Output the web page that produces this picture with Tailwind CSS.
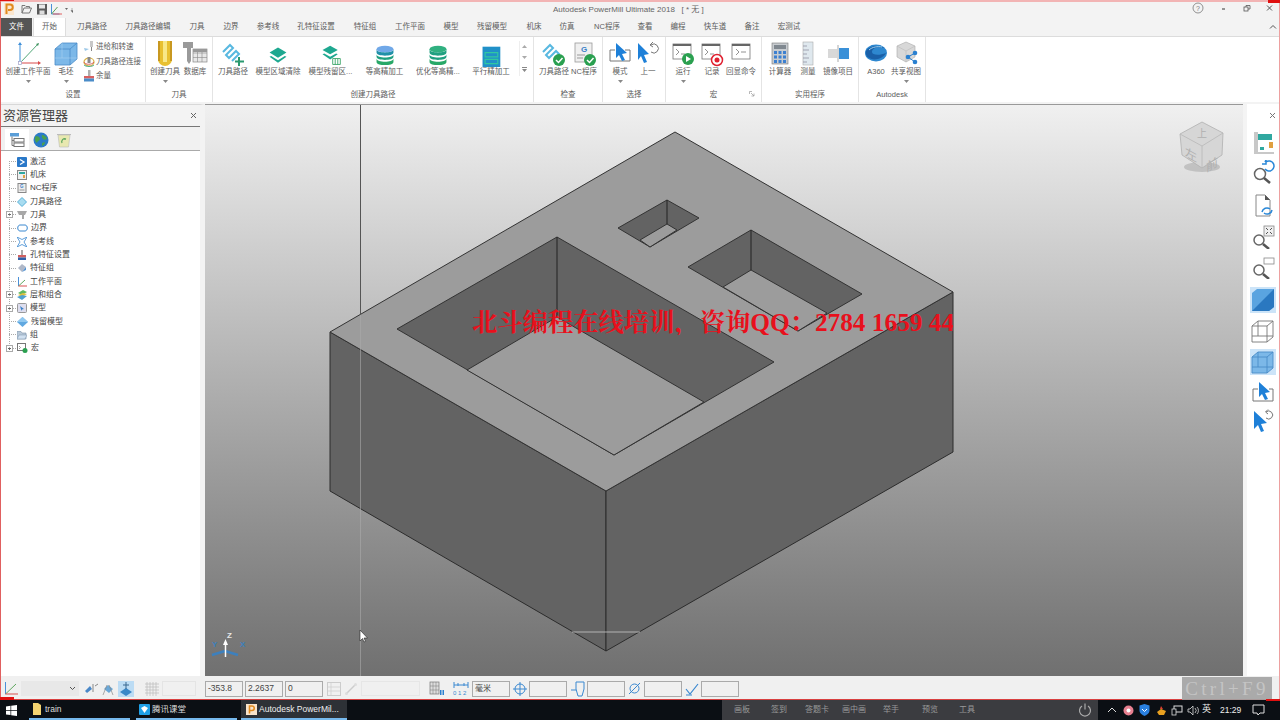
<!DOCTYPE html>
<html lang="zh">
<head>
<meta charset="utf-8">
<title>Autodesk PowerMill Ultimate 2018</title>
<script src="https://cdn.jsdelivr.net/npm/@tailwindcss/browser@4"></script>
</head>
<body class="m-0 overflow-hidden bg-black">
<div class="relative flex h-[720px] w-[1280px] flex-col overflow-hidden font-['Liberation_Sans','Noto_Sans_CJK_SC',sans-serif] text-[7.5px] text-[#5c5c5c]">

<!-- window -->
<div class="relative flex h-[700px] flex-col border-t-[2px] border-r-[1px] border-b-[1px] border-l-[1px] border-t-[#f2b4b4] border-r-[#eda0a0] border-b-[#d94040] border-l-[#e06060] bg-[#f3f3f3]">

  <!-- title bar -->
  <div class="relative flex h-[16px] items-center pl-[2px]">
    <svg width="70" height="16" viewBox="0 0 70 16">
      <rect x="1" y="1" width="10" height="12" fill="#fbe7d0"/>
      <path d="M3.500 12V2.500h3.500a2.500 2.500 0 0 1 0 5.500h-2" fill="none" stroke="#e08a20" stroke-width="2"/>
      <path d="M19 11V3.500h3l1 1h3.500v1.500M19 11l2-5h7.500l-2 5z" fill="none" stroke="#777" stroke-width="1"/>
      <rect x="34" y="2" width="10" height="10.500" fill="#5a5a5a"/><rect x="36" y="2.500" width="6" height="4" fill="#e8e8e8"/><rect x="36.500" y="8.500" width="5" height="4" fill="#ddd"/>
      <path d="M48.500 2v10h8" fill="none" stroke="#4a90d9" stroke-width="1"/><path d="M48.500 12l6-7" stroke="#5aa05a" stroke-width="1"/><path d="M50 12h9" stroke="#e06060" stroke-width="1"/>
      <path d="M62 6h3l-1.500 2z" fill="#666"/><path d="M68 7h3M68 8.500l1.500 2 1.500-2z" fill="#666" stroke="#666" stroke-width=".5"/>
    </svg>
    <span class="absolute top-[2px] left-[552px] text-[8px] leading-[12px] whitespace-pre text-[#666]">Autodesk PowerMill Ultimate 2018   [ * 无 ]</span>
    <div class="absolute top-0 right-0 flex h-[14px] items-center">
      <svg width="90" height="14" viewBox="0 0 90 14">
        <circle cx="9" cy="6" r="5" fill="none" stroke="#777" stroke-width=".8"/><text x="9" y="8.500" font-size="7" text-anchor="middle" fill="#777">?</text>
        <path d="M33 7h3" stroke="#555" stroke-width="1.200"/>
        <rect x="55" y="5" width="4" height="4" fill="none" stroke="#555" stroke-width=".8"/><path d="M57 5V3.500h4V7h-2" fill="none" stroke="#555" stroke-width=".8"/>
        <path d="M78 3.500l5 5M83 3.500l-5 5" stroke="#555" stroke-width="1"/>
      </svg>
    </div>
  </div>

  <!-- tabs -->
  <div class="relative flex h-[18px] items-stretch text-center leading-[18px] text-[#5c5c5c]">
    <div class="w-[31px] bg-[#555] text-white">文件</div>
    <div class="ml-[1px] w-[33px] border-r border-l border-[#ddd] bg-white">开始</div>
    <div class="w-[52px]">刀具路径</div>
    <div class="w-[60px]">刀具路径编辑</div>
    <div class="w-[38px]">刀具</div>
    <div class="w-[30px]">边界</div>
    <div class="w-[44px]">参考线</div>
    <div class="w-[52px]">孔特征设置</div>
    <div class="w-[46px]">特征组</div>
    <div class="w-[44px]">工作平面</div>
    <div class="w-[38px]">模型</div>
    <div class="w-[44px]">残留模型</div>
    <div class="w-[40px]">机床</div>
    <div class="w-[26px]">仿真</div>
    <div class="w-[54px]">NC程序</div>
    <div class="w-[22px]">查看</div>
    <div class="w-[44px]">编程</div>
    <div class="w-[30px]">快车道</div>
    <div class="w-[44px]">备注</div>
    <div class="w-[30px]">宏测试</div>
    <svg class="absolute top-[6px] right-[2px]" width="8" height="6" viewBox="0 0 8 6"><path d="M1 4.500l3-3 3 3" fill="none" stroke="#555" stroke-width="1"/></svg>
  </div>

  <!-- ribbon -->
  <div class="flex h-[66px] border-t border-[#dcdcdc] bg-white">
    <!-- 设置 -->
    <div class="flex w-[145px] flex-col justify-between border-r border-[#e4e4e4]">
      <div class="flex pt-[4px] pl-[1px]">
        <div class="flex w-[52px] flex-col items-center">
          <svg width="26" height="26" viewBox="0 0 26 26"><path d="M5 3v19" stroke="#3f8fd8" stroke-width="1"/><path d="M5 1l-2 3h4z" fill="#3f8fd8"/><path d="M5 22L23 3" stroke="#52a878" stroke-width="1"/><path d="M24 2l-3 1 2 2z" fill="#3a8f5a"/><path d="M5 22h19" stroke="#d84a4a" stroke-width="1"/><path d="M26 22l-3-2v4z" fill="#d84a4a"/><rect x="3.500" y="20.500" width="3" height="3" fill="#fff" stroke="#a0a0c8" stroke-width=".7"/></svg>
          <span class="h-[9px] leading-[9px] whitespace-nowrap">创建工作平面</span>
          <svg class="mt-[4px]" width="5" height="3" viewBox="0 0 5 3"><path d="M0 0h5L2.500 3z" fill="#888"/></svg>
        </div>
        <div class="flex w-[24px] flex-col items-center">
          <svg width="26" height="26" viewBox="0 0 26 26"><path d="M2 8l7-6h15v16l-7 6H2z" fill="#7cb8e8" stroke="#4a8cc8" stroke-width=".8"/><path d="M2 8h15v16M17 8l7-6" fill="none" stroke="#4a8cc8" stroke-width=".8"/><path d="M9 2v15H2M9 17h15" fill="none" stroke="#a8d0f0" stroke-width=".6"/></svg>
          <span class="h-[9px] leading-[9px] whitespace-nowrap">毛坯</span>
          <svg class="mt-[4px]" width="5" height="3" viewBox="0 0 5 3"><path d="M0 0h5L2.500 3z" fill="#888"/></svg>
        </div>
        <div class="flex flex-col gap-[2.500px] pl-[5px]">
          <div class="flex h-[12px] items-center gap-[1px] whitespace-nowrap"><svg width="12" height="12" viewBox="0 0 12 12"><rect x="7" y="0" width="3" height="6" fill="#c8c8c8"/><path d="M8.500 6v4" stroke="#888"/><path d="M1 7l5 1-4 2z" fill="#9cc8e8"/></svg>进给和转速</div>
          <div class="flex h-[12px] items-center gap-[1px] whitespace-nowrap"><svg width="12" height="12" viewBox="0 0 12 12"><ellipse cx="6" cy="6" rx="5" ry="4" fill="none" stroke="#d8b040" stroke-width="1.200"/><path d="M1 6c1 3 8 3 10 0" fill="none" stroke="#d86060"/><path d="M1 9c2 2 8 2 10 0" fill="none" stroke="#50b090"/><rect x="4.500" y="1" width="3" height="6" fill="#888"/></svg>刀具路径连接</div>
          <div class="flex h-[12px] items-center gap-[1px] whitespace-nowrap"><svg width="12" height="12" viewBox="0 0 12 12"><rect x="5" y="0" width="2.500" height="6" fill="#b0b0b0"/><rect x="1" y="6" width="10" height="2.500" fill="#d86060"/><rect x="1" y="8.500" width="10" height="3" fill="#4a8cc8"/></svg>余量</div>
        </div>
      </div>
      <div class="mb-[1px] h-[12px] text-center leading-[12px]">设置</div>
    </div>
    <!-- 刀具 -->
    <div class="flex w-[67px] flex-col justify-between border-r border-[#e4e4e4]">
      <div class="flex pt-[4px] pl-[4px]">
        <div class="flex w-[30px] flex-col items-center">
          <svg width="26" height="26" viewBox="0 0 26 26"><path d="M6 0h14v18a7 7 0 0 1-14 0z" fill="#e8c030"/><path d="M11 0h4v21h-4z" fill="#f8e888"/><path d="M6 0h2v20H6zM18 0h2v20h-2z" fill="#c89820"/></svg>
          <span class="h-[9px] leading-[9px] whitespace-nowrap">创建刀具</span>
          <svg class="mt-[4px]" width="5" height="3" viewBox="0 0 5 3"><path d="M0 0h5L2.500 3z" fill="#888"/></svg>
        </div>
        <div class="flex w-[30px] flex-col items-center">
          <svg width="26" height="26" viewBox="0 0 26 26"><path d="M1 1h10v6H9v13l-2 3-2-3V7H1z" fill="#9a9a9a"/><rect x="11" y="8" width="14" height="13" fill="#e8e8e8" stroke="#888" stroke-width=".7"/><path d="M11 12h14M11 16.500h14M15.500 8v13M20 8v13" stroke="#888" stroke-width=".6"/><rect x="11" y="8" width="14" height="3" fill="#999"/></svg>
          <span class="h-[9px] leading-[9px] whitespace-nowrap">数据库</span>
        </div>
      </div>
      <div class="mb-[1px] h-[12px] text-center leading-[12px]">刀具</div>
    </div>
    <!-- 创建刀具路径 -->
    <div class="flex w-[321px] flex-col justify-between border-r border-[#e4e4e4]">
      <div class="flex pt-[4px] pl-[5px]">
        <div class="flex w-[30px] flex-col items-center">
          <svg width="26" height="26" viewBox="0 0 26 26"><path d="M3 11l7-7 3 3-7 7 3 3 7-7 3 3-7 7" fill="none" stroke="#58b8e0" stroke-width="2"/><path d="M19 16v9M15 20.500h9" stroke="#2a9a70" stroke-width="2"/></svg>
          <span class="h-[9px] leading-[9px] whitespace-nowrap">刀具路径</span>
        </div>
        <div class="ml-[3px] flex h-[36px] w-[268px]">
          <div class="flex w-[54px] flex-col items-center">
            <svg class="mt-[4px]" width="22" height="22" viewBox="0 0 26 26"><path d="M13 3l10 6-10 6-10-6z" fill="#1ea890"/><path d="M5 13l8 5 8-5 2 1-10 7-10-7z" fill="#1ea890"/></svg>
            <span class="h-[9px] leading-[9px] whitespace-nowrap">模型区域清除</span>
          </div>
          <div class="flex w-[51px] flex-col items-center">
            <svg class="mt-[4px]" width="22" height="22" viewBox="0 0 26 26"><path d="M12 1l9 5-9 5-9-5z" fill="#1ea890"/><path d="M5 10l7 4 7-4 2 1-9 6-9-6z" fill="#1ea890"/><path d="M15 16h9v7h-9z" fill="#fff" stroke="#30a060" stroke-width="1"/><path d="M18 16v7M21 16v7" stroke="#30a060"/></svg>
            <span class="h-[9px] leading-[9px] whitespace-nowrap">模型残留区...</span>
          </div>
          <div class="flex w-[57px] flex-col items-center">
            <svg class="mt-[4px]" width="22" height="22" viewBox="0 0 26 26"><ellipse cx="13" cy="5" rx="10" ry="4" fill="#70a8e8"/><path d="M3 5v4c0 5 20 5 20 0V5c0 5-20 5-20 0z" fill="#2090a8"/><path d="M3 11v3c0 5 20 5 20 0v-3c0 5-20 5-20 0z" fill="#20a080"/><path d="M3 16v4c0 5 20 5 20 0v-4c0 5-20 5-20 0z" fill="#28a868"/></svg>
            <span class="h-[9px] leading-[9px] whitespace-nowrap">等高精加工</span>
          </div>
          <div class="flex w-[50px] flex-col items-center">
            <svg class="mt-[4px]" width="22" height="22" viewBox="0 0 26 26"><ellipse cx="13" cy="5" rx="10" ry="4" fill="#30b080"/><path d="M3 5v4c0 5 20 5 20 0V5c0 5-20 5-20 0z" fill="#20a080"/><path d="M3 11v3c0 5 20 5 20 0v-3c0 5-20 5-20 0z" fill="#20a080"/><path d="M3 16v4c0 5 20 5 20 0v-4c0 5-20 5-20 0z" fill="#28a868"/></svg>
            <span class="h-[9px] leading-[9px] whitespace-nowrap">优化等高精...</span>
          </div>
          <div class="flex w-[56px] flex-col items-center">
            <svg class="mt-[4px]" width="22" height="22" viewBox="0 0 26 26"><rect x="3" y="2" width="21" height="24" fill="#2090c8"/><path d="M6 9h15v5H6zM6 17h15v5H6z" fill="none" stroke="#30c8a0" stroke-width="1.300"/></svg>
            <span class="h-[9px] leading-[9px] whitespace-nowrap">平行精加工</span>
          </div>
        </div>
        <div class="flex h-[35px] w-[10px] flex-col items-center justify-around border-l border-[#eee] text-[#999]">
          <svg width="5" height="3" viewBox="0 0 5 3"><path d="M0 3h5L2.500 0z" fill="#aaa"/></svg>
          <svg width="5" height="3" viewBox="0 0 5 3"><path d="M0 0h5L2.500 3z" fill="#aaa"/></svg>
          <svg width="5" height="5" viewBox="0 0 5 5"><path d="M0 0h5v1H0zM0 2h5L2.500 5z" fill="#888"/></svg>
        </div>
      </div>
      <div class="mb-[1px] h-[12px] text-center leading-[12px]">创建刀具路径</div>
    </div>
    <!-- 检查 -->
    <div class="flex w-[69px] flex-col justify-between border-r border-[#e4e4e4]">
      <div class="flex pt-[4px] pl-[5px]">
        <div class="flex w-[30px] flex-col items-center">
          <svg width="26" height="26" viewBox="0 0 26 26"><path d="M2 11l7-7 3 3-7 7 3 3 7-7 3 3-5 5" fill="none" stroke="#58b8e0" stroke-width="2"/><circle cx="18" cy="19" r="6" fill="#2aa050"/><path d="M15 19l2.500 2.500 4-4.500" fill="none" stroke="#fff" stroke-width="1.500"/></svg>
          <span class="h-[9px] leading-[9px] whitespace-nowrap">刀具路径</span>
        </div>
        <div class="flex w-[30px] flex-col items-center">
          <svg width="26" height="26" viewBox="0 0 26 26"><rect x="4" y="2" width="17" height="19" fill="#f0f0f0" stroke="#999" stroke-width=".8"/><text x="10" y="11" font-size="8" font-weight="bold" fill="#3a80c8">G</text><path d="M6 14h8M6 17h6" stroke="#999"/><circle cx="19" cy="19" r="6" fill="#2aa050"/><path d="M16 19l2.500 2.500 4-4.500" fill="none" stroke="#fff" stroke-width="1.500"/></svg>
          <span class="h-[9px] leading-[9px] whitespace-nowrap">NC程序</span>
        </div>
      </div>
      <div class="mb-[1px] h-[12px] text-center leading-[12px]">检查</div>
    </div>
    <!-- 选择 -->
    <div class="flex w-[63px] flex-col justify-between border-r border-[#e4e4e4]">
      <div class="flex pt-[4px] pl-[3px]">
        <div class="flex w-[28px] flex-col items-center">
          <svg width="26" height="26" viewBox="0 0 26 26"><path d="M3 9h5M18 9h5v11H3V9" fill="none" stroke="#777" stroke-width="1"/><path d="M9 2l11 10-5 1 3 6-3 1-3-6-3 3z" fill="#1e80d8"/></svg>
          <span class="h-[9px] leading-[9px] whitespace-nowrap">模式</span>
          <svg class="mt-[4px]" width="5" height="3" viewBox="0 0 5 3"><path d="M0 0h5L2.500 3z" fill="#888"/></svg>
        </div>
        <div class="flex w-[28px] flex-col items-center">
          <svg width="26" height="26" viewBox="0 0 26 26"><path d="M3 2l11 11-5 1 3 7-3 1-3-7-3 4z" fill="#1e80d8"/><path d="M16 4a4.500 4.500 0 1 1 0 7" fill="none" stroke="#777" stroke-width="1"/><path d="M18 1l-3 3 3 2" fill="none" stroke="#777" stroke-width="1"/></svg>
          <span class="h-[9px] leading-[9px] whitespace-nowrap">上一</span>
        </div>
      </div>
      <div class="mb-[1px] h-[12px] text-center leading-[12px]">选择</div>
    </div>
    <!-- 宏 -->
    <div class="relative flex w-[96px] flex-col justify-between border-r border-[#e4e4e4]">
      <div class="flex gap-[1px] pt-[4px] pl-[3px]">
        <div class="flex w-[28px] flex-col items-center">
          <svg width="26" height="26" viewBox="0 0 26 26"><rect x="3" y="3" width="18" height="15" fill="#fff" stroke="#777" stroke-width=".8"/><rect x="3" y="3" width="18" height="2" fill="#666"/><path d="M6 8l3 3-3 3M11 13h4" fill="none" stroke="#777" stroke-width=".8"/><circle cx="18" cy="18" r="6" fill="#2aa050"/><path d="M16 15l5 3-5 3z" fill="#fff"/></svg>
          <span class="h-[9px] leading-[9px] whitespace-nowrap">运行</span>
          <svg class="mt-[4px]" width="5" height="3" viewBox="0 0 5 3"><path d="M0 0h5L2.500 3z" fill="#888"/></svg>
        </div>
        <div class="flex w-[28px] flex-col items-center">
          <svg width="26" height="26" viewBox="0 0 26 26"><rect x="3" y="3" width="18" height="15" fill="#fff" stroke="#777" stroke-width=".8"/><rect x="3" y="3" width="18" height="2" fill="#666"/><path d="M6 8l3 3-3 3M11 13h4" fill="none" stroke="#777" stroke-width=".8"/><circle cx="18" cy="19" r="5.500" fill="#fff" stroke="#e02030" stroke-width="1.500"/><circle cx="18" cy="19" r="2.500" fill="#e02030"/></svg>
          <span class="h-[9px] leading-[9px] whitespace-nowrap">记录</span>
        </div>
        <div class="flex w-[28px] flex-col items-center">
          <svg width="26" height="26" viewBox="0 0 26 26"><rect x="4" y="3" width="18" height="15" fill="#fff" stroke="#777" stroke-width=".8"/><rect x="4" y="3" width="18" height="2" fill="#666"/><path d="M8 8l3 3-3 3M13 11h5" fill="none" stroke="#777" stroke-width=".8"/></svg>
          <span class="h-[9px] leading-[9px] whitespace-nowrap">回显命令</span>
        </div>
      </div>
      <div class="mb-[1px] h-[12px] text-center leading-[12px]">宏</div>
      <svg class="absolute right-[6px] bottom-[5px]" width="6" height="6" viewBox="0 0 6 6"><path d="M.5 3V.5H3M2 2l3 3M5 2.500V5H2.500" fill="none" stroke="#999" stroke-width=".7"/></svg>
    </div>
    <!-- 实用程序 -->
    <div class="flex w-[97px] flex-col justify-between border-r border-[#e4e4e4]">
      <div class="flex pt-[4px] pl-[4px]">
        <div class="flex w-[28px] flex-col items-center">
          <svg width="26" height="26" viewBox="0 0 26 26"><rect x="5" y="2" width="16" height="21" fill="#c8ccd0" stroke="#777" stroke-width=".6"/><rect x="7" y="4" width="12" height="4" fill="#808890"/><path d="M7 10h3v3H7zM11.500 10h3v3h-3zM16 10h3v3h-3zM7 14.500h3v3H7zM11.500 14.500h3v3h-3zM16 14.500h3v3h-3zM7 19h3v3H7zM11.500 19h3v3h-3zM16 19h3v3h-3z" fill="#3c80d0"/></svg>
          <span class="h-[9px] leading-[9px] whitespace-nowrap">计算器</span>
        </div>
        <div class="flex w-[28px] flex-col items-center">
          <svg width="26" height="26" viewBox="0 0 26 26"><rect x="8" y="1" width="10" height="23" fill="#dfe8ee" stroke="#aaa" stroke-width=".6"/><path d="M8 5h4M8 9h6M8 13h4M8 17h6M8 21h4" stroke="#889" stroke-width=".7"/></svg>
          <span class="h-[9px] leading-[9px] whitespace-nowrap">测量</span>
        </div>
        <div class="flex w-[32px] flex-col items-center">
          <svg width="26" height="26" viewBox="0 0 26 26"><rect x="3" y="8" width="9" height="9" fill="#d8d8d8"/><rect x="14" y="7" width="10" height="11" fill="#3a90d8"/><path d="M13 4v17" stroke="#aaa"/></svg>
          <span class="h-[9px] leading-[9px] whitespace-nowrap">镜像项目</span>
        </div>
      </div>
      <div class="mb-[1px] h-[12px] text-center leading-[12px]">实用程序</div>
    </div>
    <!-- Autodesk -->
    <div class="flex w-[67px] flex-col justify-between border-r border-[#e4e4e4]">
      <div class="flex pt-[4px] pl-[2px]">
        <div class="flex w-[30px] flex-col items-center">
          <svg width="26" height="26" viewBox="0 0 26 26"><ellipse cx="13" cy="12" rx="11" ry="8.500" fill="#2e88d0"/><path d="M3 10c4-6 14-6 19-3-7-2-13 0-13 4 0 3 7 4 14 1-3 6-12 8-17 5-2-1-4-4-3-7z" fill="#1a60a8"/><path d="M6 9c3-3 9-4 13-3" stroke="#9cd0f0" fill="none"/></svg>
          <span class="h-[9px] leading-[9px] whitespace-nowrap">A360</span>
        </div>
        <div class="flex w-[30px] flex-col items-center">
          <svg width="26" height="26" viewBox="0 0 26 26"><path d="M13 1l9 4v11l-9 5-9-5V5z" fill="#d8d8d8" stroke="#aaa" stroke-width=".6"/><path d="M4 5l9 5 9-5M13 10v11" fill="none" stroke="#bbb" stroke-width=".6"/><circle cx="15" cy="16" r="2.300" fill="#2a80d0"/><circle cx="22" cy="12" r="2.300" fill="#2a80d0"/><circle cx="22" cy="21" r="2.300" fill="#2a80d0"/><path d="M22 12l-7 4 7 5" fill="none" stroke="#2a80d0"/></svg>
          <span class="h-[9px] leading-[9px] whitespace-nowrap">共享视图</span>
          <svg class="mt-[4px]" width="5" height="3" viewBox="0 0 5 3"><path d="M0 0h5L2.500 3z" fill="#888"/></svg>
        </div>
      </div>
      <div class="mb-[1px] h-[12px] text-center leading-[12px]">Autodesk</div>
    </div>
    <div class="flex-1"></div>
  </div>

  <!-- main area -->
  <div class="mt-[2px] flex min-h-0 flex-1">
    <!-- explorer -->
    <div class="flex w-[204px] flex-col border-t border-r-[5px] border-t-[#d8d8d8] border-r-[#f3f3f3] bg-white">
      <div class="flex h-[22px] items-center justify-between border-b border-[#777] bg-[#f3f3f3] pr-[3px] pl-[2px] text-[13px] leading-[20px] text-[#444]">
        <span>资源管理器</span>
        <svg width="7" height="7" viewBox="0 0 7 7"><path d="M1 1l5 5M6 1l-5 5" stroke="#666" stroke-width="1"/></svg>
      </div>
      <div class="flex h-[24px] items-end border-b border-[#aaa] bg-[#f1f1f1] pl-[4px]">
        <div class="flex h-[21px] w-[24px] items-center justify-center bg-white"><svg width="16" height="16" viewBox="0 0 16 16"><rect x="1" y="1" width="9" height="3.500" fill="#5a9ed8"/><path d="M3 4.500v9h2M3 8.500h2" fill="none" stroke="#777"/><rect x="5" y="6.500" width="10" height="3.500" fill="#fff" stroke="#777"/><rect x="5" y="11" width="10" height="3.500" fill="#fff" stroke="#777"/></svg></div>
        <div class="flex h-[21px] w-[23px] items-center justify-center"><svg width="16" height="16" viewBox="0 0 16 16"><circle cx="8" cy="8" r="7.500" fill="#2a7ac8"/><path d="M3 4c2 0 4 1 4 3s-3 2-3 4c-2-1-3-5-1-7zM9 3c2 0 5 2 5 4l-3 1c-1-1-3-3-2-5zM9 11l3-1c0 2-1 3-3 4z" fill="#48a050"/></svg></div>
        <div class="flex h-[21px] w-[23px] items-center justify-center"><svg width="16" height="16" viewBox="0 0 16 16"><path d="M2 3h12l-1.500 12h-9z" fill="#e8e8b0" stroke="#bbb" stroke-width=".6"/><path d="M1 2.500h14" stroke="#bbb"/><path d="M6 11a3 3 0 0 1 4-4M10 7l-2 0" fill="none" stroke="#60a860" stroke-width="1.300"/></svg></div>
      </div>
      <!-- tree -->
      <div class="relative mt-[4px] flex flex-col text-[8px] text-[#444]">
        <div class="absolute top-[6px] left-[8px] h-[187px] border-l border-dotted border-[#aaa]"></div>
        <div class="flex h-[13.33px] items-center pl-[8px]"><span class="w-[7px] border-t border-dotted border-[#aaa]"></span><svg class="mr-[3px] ml-[1px]" width="10" height="10" viewBox="0 0 10 10"><rect width="10" height="10" rx="1" fill="#2a78c8"/><path d="M3 2.500L7 5 3 7.500" fill="none" stroke="#fff" stroke-width="1.300"/></svg>激活</div>
        <div class="flex h-[13.33px] items-center pl-[8px]"><span class="w-[7px] border-t border-dotted border-[#aaa]"></span><svg class="mr-[3px] ml-[1px]" width="10" height="10" viewBox="0 0 10 10"><rect x=".5" y=".5" width="9" height="9" fill="#eee" stroke="#888"/><rect x="2" y="2" width="6" height="2" fill="#30a8a0"/><rect x="6" y="5" width="2" height="3" fill="#e0a040"/></svg>机床</div>
        <div class="flex h-[13.33px] items-center pl-[8px]"><span class="w-[7px] border-t border-dotted border-[#aaa]"></span><svg class="mr-[3px] ml-[1px]" width="10" height="10" viewBox="0 0 10 10"><rect x="1" y=".5" width="8" height="9" fill="#eee" stroke="#888"/><text x="3" y="5" font-size="4.500" font-weight="bold" fill="#3a80c8">G</text><path d="M2.500 7h5" stroke="#999"/></svg>NC程序</div>
        <div class="flex h-[13.33px] items-center pl-[8px]"><span class="w-[7px] border-t border-dotted border-[#aaa]"></span><svg class="mr-[3px] ml-[1px]" width="10" height="10" viewBox="0 0 10 10"><path d="M5 .5L9.500 5 5 9.500.5 5z" fill="#a8dcf0" stroke="#58b0d8"/></svg>刀具路径</div>
        <div class="flex h-[13.33px] items-center pl-[5px]"><svg width="7" height="7" viewBox="0 0 7 7"><rect x=".5" y=".5" width="6" height="6" fill="#fff" stroke="#aaa"/><path d="M2 3.500h3M3.500 2v3" stroke="#666"/></svg><span class="w-[3px] border-t border-dotted border-[#aaa]"></span><svg class="mr-[3px] ml-[1px]" width="10" height="10" viewBox="0 0 10 10"><path d="M0 1h10L8 5H7v4H5V5H2z" fill="#a8a8a8"/></svg>刀具</div>
        <div class="flex h-[13.33px] items-center pl-[8px]"><span class="w-[7px] border-t border-dotted border-[#aaa]"></span><svg class="mr-[3px] ml-[1px]" width="11" height="10" viewBox="0 0 11 10"><path d="M3 2h5c3 0 3 6 0 6H3C0 8 0 2 3 2z" fill="#fff" stroke="#3a88d0"/></svg>边界</div>
        <div class="flex h-[13.33px] items-center pl-[8px]"><span class="w-[7px] border-t border-dotted border-[#aaa]"></span><svg class="mr-[3px] ml-[1px]" width="10" height="10" viewBox="0 0 10 10"><path d="M0 0l3 5-3 5 5-2.500L10 10 7 5l3-5-5 2.500z" fill="#fff" stroke="#3a88d0" stroke-width=".8"/></svg>参考线</div>
        <div class="flex h-[13.33px] items-center pl-[8px]"><span class="w-[7px] border-t border-dotted border-[#aaa]"></span><svg class="mr-[3px] ml-[1px]" width="10" height="10" viewBox="0 0 10 10"><rect x="4" y="0" width="2" height="5" fill="#aaa"/><rect x="1" y="5" width="8" height="2.500" fill="#d06060"/><rect x="1" y="7.500" width="8" height="2.500" fill="#3060a8"/></svg>孔特征设置</div>
        <div class="flex h-[13.33px] items-center pl-[8px]"><span class="w-[7px] border-t border-dotted border-[#aaa]"></span><svg class="mr-[3px] ml-[1px]" width="10" height="10" viewBox="0 0 10 10"><path d="M1 5l4-4 4 3-4 5z" fill="#b0b8c8"/><path d="M5 9l4-5v3z" fill="#5090d0"/></svg>特征组</div>
        <div class="flex h-[13.33px] items-center pl-[8px]"><span class="w-[7px] border-t border-dotted border-[#aaa]"></span><svg class="mr-[3px] ml-[1px]" width="10" height="10" viewBox="0 0 10 10"><path d="M1.500 0v9" stroke="#4a90d9"/><path d="M1.500 9L8 3" stroke="#60a860"/><path d="M1.500 9H10" stroke="#d85050"/></svg>工作平面</div>
        <div class="flex h-[13.33px] items-center pl-[5px]"><svg width="7" height="7" viewBox="0 0 7 7"><rect x=".5" y=".5" width="6" height="6" fill="#fff" stroke="#aaa"/><path d="M2 3.500h3M3.500 2v3" stroke="#666"/></svg><span class="w-[3px] border-t border-dotted border-[#aaa]"></span><svg class="mr-[3px] ml-[1px]" width="10" height="10" viewBox="0 0 10 10"><path d="M1 3l5-3 4 2-5 3z" fill="#60b860"/><path d="M1 5l5-2 4 1-5 3z" fill="#e0c040"/><path d="M0 7l5-2 5 1-5 4z" fill="#50a0d0"/></svg>层和组合</div>
        <div class="flex h-[13.33px] items-center pl-[5px]"><svg width="7" height="7" viewBox="0 0 7 7"><rect x=".5" y=".5" width="6" height="6" fill="#fff" stroke="#aaa"/><path d="M2 3.500h3M3.500 2v3" stroke="#666"/></svg><span class="w-[3px] border-t border-dotted border-[#aaa]"></span><svg class="mr-[3px] ml-[1px]" width="10" height="10" viewBox="0 0 10 10"><rect x=".5" y=".5" width="9" height="9" rx="1" fill="#dde" stroke="#999"/><path d="M3 3l4 3-2 .5L4.500 8z" fill="#3a80c8"/></svg>模型</div>
        <div class="flex h-[13.33px] items-center pl-[8px]"><span class="w-[7px] border-t border-dotted border-[#aaa]"></span><svg class="mr-[3px] ml-[1px]" width="11" height="10" viewBox="0 0 11 10"><path d="M5.500 0L11 5 5.500 10 0 5z" fill="#60a8e0"/><path d="M5.500 0L11 5H0z" fill="#90c8f0"/></svg>残留模型</div>
        <div class="flex h-[13.33px] items-center pl-[8px]"><span class="w-[7px] border-t border-dotted border-[#aaa]"></span><svg class="mr-[3px] ml-[1px]" width="10" height="10" viewBox="0 0 10 10"><path d="M0 1.500h4l1 1.500h4v6H0z" fill="#b8c8d8" stroke="#7890a8" stroke-width=".6"/><path d="M2 5h8L8 9H0z" fill="#d0e0f0" stroke="#7890a8" stroke-width=".5"/></svg>组</div>
        <div class="flex h-[13.33px] items-center pl-[5px]"><svg width="7" height="7" viewBox="0 0 7 7"><rect x=".5" y=".5" width="6" height="6" fill="#fff" stroke="#aaa"/><path d="M2 3.500h3M3.500 2v3" stroke="#666"/></svg><span class="w-[3px] border-t border-dotted border-[#aaa]"></span><svg class="mr-[3px] ml-[1px]" width="11" height="10" viewBox="0 0 11 10"><rect x=".5" y=".5" width="8" height="7" fill="#fff" stroke="#777"/><path d="M2 3l1.500 1.500L2 6" fill="none" stroke="#777" stroke-width=".7"/><circle cx="8" cy="7.500" r="2.500" fill="#2aa050"/></svg>宏</div>
      </div>
    </div>

    <!-- viewport -->
    <div class="relative h-[572px] w-[1038px] self-start overflow-hidden border-t border-[#999] bg-linear-to-b from-[#f0f0f0] to-[#707070]">
      <svg class="absolute -top-[1px] left-0" width="1038" height="572" viewBox="205 104 1038 572">
        <!-- block -->
        <path d="M330 332L606 491V651L330 491z" fill="#636363" stroke="#2c2c2c" stroke-width="1"/>
        <path d="M606 491L953 292V452L606 651z" fill="#636363" stroke="#2c2c2c" stroke-width="1"/>
        <path d="M675 132L953 292 606 491 330 332z" fill="#9c9c9c" stroke="#333" stroke-width="1"/>
        <!-- big pocket -->
        <path d="M557 237L774 362 614 455 397 329z" fill="#636363" stroke="#333" stroke-width="1"/>
        <path d="M557 317L704 402 614 455 467 370z" fill="#9c9c9c" stroke="#333" stroke-width="1"/>
        <path d="M557 237V317" stroke="#222" stroke-width="1"/>
        <!-- small pocket -->
        <path d="M667 200L699 218 650 247 618 228z" fill="#636363" stroke="#333" stroke-width="1"/>
        <path d="M667 224L677 230 650 247 640 240z" fill="#9c9c9c" stroke="#333" stroke-width="1"/>
        <path d="M667 200V224" stroke="#222" stroke-width="1"/>
        <!-- medium pocket -->
        <path d="M751 230L862 294 798 331 688 267z" fill="#636363" stroke="#333" stroke-width="1"/>
        <path d="M751 270L827 313 798 331 723 287z" fill="#9c9c9c" stroke="#333" stroke-width="1"/>
        <path d="M751 230V270" stroke="#222" stroke-width="1"/>
        <!-- vertical guide -->
        <path d="M360.500 104V315" stroke="#555" stroke-width="1"/>
        <path d="M360.500 315V676" stroke="#aaa" stroke-opacity=".6" stroke-width="1"/>
        <path d="M572 632H640" stroke="#c8c8c8" stroke-opacity=".8" stroke-width="1"/>
        <!-- cursor -->
        <path d="M360 630v11l2.500-2.500 1.500 3.500 1.500-.7-1.500-3.300h3.500z" fill="#fff" stroke="#222" stroke-width=".6"/>
        <!-- triad -->
        <path d="M225 651L212 655M225 651L238 655" stroke="#3d80bd" stroke-width="2.500"/>
        <path d="M225.500 657V644" stroke="#fff" stroke-width="1.500"/><path d="M225.500 639l-2.500 6h5z" fill="#fff"/>
        <text x="227" y="638" font-size="8" font-weight="bold" fill="#e8e8e8" font-family="Liberation Sans">Z</text>
        <text x="212" y="647" font-size="8" font-weight="bold" fill="#3d80bd" font-family="Liberation Sans">Y</text>
        <text x="240" y="647" font-size="8" font-weight="bold" fill="#3d80bd" font-family="Liberation Sans">X</text>
        <!-- view cube -->
        <ellipse cx="1202" cy="167" rx="18" ry="5" fill="#888" fill-opacity=".35"/>
        <path d="M1202 122L1223 133 1222 155 1202 168 1182 155 1180 134z" fill="#d6d6d6" stroke="#b0b0b0" stroke-width=".8"/>
        <path d="M1180 134L1202 146 1223 133M1202 146V168" fill="none" stroke="#b8b8b8" stroke-width=".8"/>
        <text x="1202" y="137" font-size="10" text-anchor="middle" fill="#b0b0b0">上</text>
        <text transform="matrix(1 .55 0 1 1191 140)" y="19" font-size="12" text-anchor="middle" fill="#b0b0b0">左</text>
        <text transform="matrix(1 -.55 0 1 1212 162)" y="7" font-size="12" text-anchor="middle" fill="#b0b0b0">前</text>
      </svg>
      <div class="absolute top-[204px] left-[267px] w-[481px] overflow-hidden text-[25.300px] leading-[26px] font-bold whitespace-nowrap text-[#e8101c] font-['Liberation_Serif','Noto_Serif_CJK_SC','Noto_Sans_CJK_SC',serif]">北斗编程在线培训，咨询QQ：2784 1659 44</div>
    </div>

    <!-- right toolbar -->
    <div class="relative flex flex-1 flex-col items-center border-l-[4px] border-[#f4f4f4] bg-white pt-[27px]">
      <svg class="absolute top-[8px] right-[3px]" width="7" height="7" viewBox="0 0 7 7"><path d="M1 1l5 5M6 1l-5 5" stroke="#777" stroke-width="1"/></svg>
      <svg width="24" height="24" viewBox="0 0 24 24"><path d="M3 1h4v20h16v2H3z" fill="#c8c8c8"/><rect x="7" y="3" width="14" height="6" fill="#30a8a0"/><rect x="18" y="11" width="4" height="6" fill="#e0a040"/><rect x="9" y="16" width="4" height="3" fill="#30a8a0"/></svg>
      <svg class="mt-[5px]" width="24" height="24" viewBox="0 0 24 24"><circle cx="9" cy="14" r="5.500" fill="none" stroke="#666" stroke-width="1.500"/><path d="M13 18l6 5" stroke="#555" stroke-width="2.500"/><path d="M14 9a5 5 0 1 0 1-7M14 2l1-2v4h-4" fill="none" stroke="#2a88d8" stroke-width="1.500"/></svg>
      <svg class="mt-[9px]" width="24" height="24" viewBox="0 0 24 24"><path d="M5 2h9l5 5v16H5z" fill="#fff" stroke="#888" stroke-width="1"/><path d="M14 2l5 5h-5z" fill="#555"/><path d="M11 19a5 5 0 0 1 8-3M21 17a5 5 0 0 1-8 3" fill="none" stroke="#2a88d8" stroke-width="1.500"/></svg>
      <svg class="mt-[8px]" width="24" height="24" viewBox="0 0 24 24"><circle cx="8" cy="15" r="5" fill="none" stroke="#666" stroke-width="1.500"/><path d="M12 19l6 5" stroke="#555" stroke-width="2.500"/><rect x="13" y="1" width="10" height="10" fill="#f0f0f0" stroke="#888" stroke-width=".8"/><path d="M15 3l2 2M21 3l-2 2M15 9l2-2M21 9l-2-2" stroke="#555"/></svg>
      <svg class="mt-[6px]" width="24" height="24" viewBox="0 0 24 24"><circle cx="8" cy="15" r="5" fill="none" stroke="#666" stroke-width="1.500"/><path d="M12 19l6 5" stroke="#555" stroke-width="2.500"/><rect x="13" y="3" width="10" height="6" fill="#fff" stroke="#888" stroke-width=".8"/></svg>
      <div class="mt-[8px] flex h-[26px] w-[26px] items-center justify-center bg-[#cce4f8]"><svg width="24" height="24" viewBox="0 0 24 24"><path d="M1 5l5-4h17v18l-5 4H1z" fill="#5aa4e0"/><path d="M1 23L23 1v18l-5 4z" fill="#2a78c0"/></svg></div>
      <svg class="mt-[6px]" width="24" height="24" viewBox="0 0 24 24"><path d="M1 7l6-5h15v16l-6 5H1z" fill="#fff" stroke="#777" stroke-width=".9"/><path d="M1 7h15v16M16 7l6-5M7 2v15H1M7 17h15" fill="none" stroke="#777" stroke-width=".9"/></svg>
      <div class="mt-[6px] flex h-[26px] w-[26px] items-center justify-center bg-[#cce4f8]"><svg width="24" height="24" viewBox="0 0 24 24"><path d="M1 7l6-5h15v16l-6 5H1z" fill="#7cb8e8" stroke="#4a8cc8" stroke-width=".9"/><path d="M1 7h15v16M16 7l6-5M7 2v15H1M7 17h15" fill="none" stroke="#4a8cc8" stroke-width=".9"/></svg></div>
      <svg class="mt-[6px]" width="24" height="24" viewBox="0 0 24 24"><path d="M2 8h5M18 8h4v12H2V8" fill="none" stroke="#777" stroke-width="1"/><path d="M8 1l11 10-5 1 3 6-3 1-3-6-3 3z" fill="#1e80d8"/></svg>
      <svg class="mt-[3px]" width="24" height="24" viewBox="0 0 24 24"><path d="M3 3l13 12-6 1 3 7-3 1-3-7-4 4z" fill="#1e80d8"/><path d="M15 4a4 4 0 1 1 0 6" fill="none" stroke="#777" stroke-width="1"/><path d="M17 1.500l-2.500 2.500 2.500 2" fill="none" stroke="#777" stroke-width="1"/></svg>
    </div>
  </div>

  <!-- status bar -->
  <div class="flex h-[23px] shrink-0 items-center bg-[#f0f0f0] pt-[2px] text-[8.500px] text-[#444]">
    <svg class="ml-[3px]" width="15" height="15" viewBox="0 0 15 15"><path d="M1.500 1v12" stroke="#4a90d9"/><path d="M1.500 13L12 3" stroke="#60a860"/><path d="M1.500 13H14" stroke="#d85050"/></svg>
    <div class="ml-[2px] flex h-[15px] w-[58px] items-center justify-end bg-[#e8e8e8] pr-[3px]"><svg width="7" height="5" viewBox="0 0 7 5"><path d="M1 1l2.500 2.500L6 1" fill="none" stroke="#555"/></svg></div>
    <svg class="ml-[4px]" width="16" height="16" viewBox="0 0 16 16"><path d="M2 10l5-5 2 3-5 4z" fill="#4a88c8"/><path d="M10 3v8M12 5l3-2" stroke="#888"/></svg>
    <svg class="ml-[1px]" width="16" height="16" viewBox="0 0 16 16"><path d="M8 4l5 4-4 4-5-4z" fill="#6aa8d8"/><path d="M3 14l4-10M13 14L9 4" stroke="#888" stroke-width=".7"/></svg>
    <div class="ml-[2px] flex h-[16px] w-[16px] items-center justify-center bg-[#bcdcf4]"><svg width="14" height="14" viewBox="0 0 14 14"><path d="M7 6l6 4-6 4-6-4z" fill="#3a88c8"/><path d="M7 0v7M4 3h6" stroke="#3a6890"/></svg></div>
    <svg class="ml-[11px]" width="14" height="14" viewBox="0 0 14 14"><path d="M0 2h14M0 5h14M0 8h14M0 11h14M2 0v14M5 0v14M8 0v14M11 0v14" stroke="#c0c0c0" stroke-width=".8"/></svg>
    <div class="ml-[3px] h-[15px] w-[34px] border border-[#e4e4e4]"></div>
    <div class="ml-[9px] flex h-[16px] w-[38px] items-center border border-[#aaa] pl-[2px]">-353.8</div>
    <div class="ml-[2px] flex h-[16px] w-[38px] items-center border border-[#aaa] pl-[2px]">2.2637</div>
    <div class="ml-[2px] flex h-[16px] w-[38px] items-center border border-[#aaa] pl-[2px]">0</div>
    <svg class="ml-[4px]" width="14" height="14" viewBox="0 0 14 14"><rect x=".5" y=".5" width="13" height="13" fill="none" stroke="#ccc"/><path d="M4 1v12M1 5h12M1 9h12" stroke="#ccc" stroke-width=".7"/></svg>
    <svg class="ml-[3px]" width="14" height="14" viewBox="0 0 14 14"><path d="M2 12l9-9" stroke="#ccc" stroke-width="1.500"/><circle cx="2.500" cy="11.500" r="1.500" fill="#ddd"/><circle cx="11.500" cy="2.500" r="1.500" fill="#ddd"/></svg>
    <div class="ml-[3px] h-[15px] w-[59px] border border-[#e6e6e6]"></div>
    <svg class="ml-[9px]" width="15" height="15" viewBox="0 0 15 15"><rect x="1" y="1" width="9" height="12" fill="#ddd" stroke="#777" stroke-width=".7"/><path d="M1 5h9M1 9h9M4 1v12M7 1v12" stroke="#777" stroke-width=".5"/><path d="M11 9h1.500v5H11zM13.500 9H15v5h-1.500z" fill="#2a80d0"/></svg>
    <svg class="ml-[9px]" width="16" height="16" viewBox="0 0 16 16"><path d="M1 4h14M1 1v6M15 1v6M5 2v3M11 2v3" fill="none" stroke="#3a88d0"/><text x="0" y="14" font-size="6" fill="#3a88d0">0 1 2</text></svg>
    <div class="ml-[3px] flex h-[16px] w-[38px] items-center border border-[#aaa] pl-[2px] text-[8px]">毫米</div>
    <svg class="ml-[3px]" width="14" height="14" viewBox="0 0 14 14"><circle cx="7" cy="7" r="5" fill="none" stroke="#3a88d0"/><path d="M7 0v14M0 7h14" stroke="#3a88d0"/></svg>
    <div class="ml-[2px] h-[16px] w-[38px] border border-[#aaa]"></div>
    <svg class="ml-[3px]" width="16" height="16" viewBox="0 0 16 16"><path d="M1 9h5M6 1h8v7l-2 7H8L6 8z" fill="none" stroke="#3a88d0"/></svg>
    <div class="ml-[1px] h-[16px] w-[38px] border border-[#aaa]"></div>
    <svg class="ml-[3px]" width="13" height="13" viewBox="0 0 13 13"><circle cx="6.500" cy="6.500" r="4.500" fill="none" stroke="#3a88d0"/><path d="M1 12L12 1" stroke="#3a88d0"/></svg>
    <div class="ml-[3px] h-[16px] w-[38px] border border-[#aaa]"></div>
    <svg class="ml-[3px]" width="14" height="14" viewBox="0 0 14 14"><path d="M1 7l4 5L13 2" fill="none" stroke="#3a88d0" stroke-width="1.200"/><path d="M1 13h6" stroke="#3a88d0"/></svg>
    <div class="ml-[2px] h-[16px] w-[38px] border border-[#aaa]"></div>
  </div>
</div>

<!-- taskbar -->
<div class="flex h-[20px] items-stretch bg-[#0b0f14] text-[8.500px] text-[#ddd]">
  <div class="flex w-[22px] items-center justify-center"><svg width="11" height="11" viewBox="0 0 11 11"><path d="M0 1.500l4.500-.7v4.200H0zM5.200.7L11 0v5H5.200zM0 5.700h4.500v4.400L0 9.500zM5.200 5.700H11V11l-5.800-.8z" fill="#fff"/></svg></div>
  <div class="ml-[7px] flex w-[101px] items-center gap-[4px] border-b-[2px] border-[#76b9ed] pl-[4px]"><svg width="8" height="12" viewBox="0 0 8 12"><path d="M0 0h5l3 2v10H0z" fill="#f4d370"/></svg>train</div>
  <div class="ml-[6px] flex w-[101px] items-center gap-[2px] border-b-[2px] border-[#76b9ed] pl-[3px]"><svg width="11" height="11" viewBox="0 0 11 11"><rect width="11" height="11" rx="1" fill="#1ea0e8"/><path d="M5.500 2l3.500 2-3.500 5L2 4z" fill="#fff"/></svg>腾讯课堂</div>
  <div class="ml-[4px] flex w-[106px] items-center gap-[2px] border-b-[2px] border-[#76b9ed] bg-[#2d3136] pl-[5px] text-[#eee]"><svg width="11" height="11" viewBox="0 0 11 11"><rect width="11" height="11" fill="#f8e4cc"/><path d="M3.500 9.500V2H6a2 2 0 0 1 0 4.500H4" fill="none" stroke="#e08a20" stroke-width="1.600"/></svg>Autodesk PowerMil...</div>
  <div class="ml-[375px] flex w-[376px] items-center bg-[#3b3c40] pr-[2px] text-[8px] text-[#999]">
    <span class="ml-[12px] w-[37px]">画板</span><span class="w-[34px]">签到</span><span class="w-[37px]">答题卡</span><span class="w-[41px]">画中画</span><span class="w-[39px]">举手</span><span class="w-[37px]">预览</span><span class="w-[119px]">工具</span>
    <svg width="14" height="14" viewBox="0 0 14 14"><path d="M4 3a5.500 5.500 0 1 0 6 0M7 0.500v6" fill="none" stroke="#aaa" stroke-width="1.200"/></svg>
  </div>
  <div class="flex flex-1 items-center pl-[9px] text-[#eee]">
    <svg width="10" height="8" viewBox="0 0 10 8"><path d="M1 6l4-4 4 4" fill="none" stroke="#ddd"/></svg>
    <svg class="ml-[6px]" width="11" height="11" viewBox="0 0 11 11"><circle cx="5.500" cy="5.500" r="5" fill="#e88090"/><circle cx="5.500" cy="5.500" r="2" fill="#fff"/></svg>
    <svg class="ml-[5px]" width="11" height="12" viewBox="0 0 11 12"><path d="M.5 1.500L5.500 0l5 1.500v5c0 3-3 4.500-5 5.500-2-1-5-2.500-5-5.500z" fill="#2a80e0"/><path d="M3 5l2.500 2.500L8 5" fill="none" stroke="#fff"/></svg>
    <svg class="ml-[6px]" width="12" height="11" viewBox="0 0 12 11"><path d="M1 7l4-3 5 2-2 4H3z" fill="#e8a020"/><path d="M5 1l2 3-3 0z" fill="#e04030"/></svg>
    <svg class="ml-[3px]" width="12" height="11" viewBox="0 0 12 11"><rect x="3" y="1" width="8" height="6" fill="none" stroke="#ddd"/><rect x="1" y="4" width="4" height="6" fill="#0b0f14" stroke="#ddd" stroke-width=".8"/></svg>
    <svg class="ml-[4px]" width="12" height="11" viewBox="0 0 12 11"><path d="M1 4h2l3-3v9L3 7H1z" fill="none" stroke="#ddd" stroke-width=".8"/><path d="M8 3a3.500 3.500 0 0 1 0 5M10 2a5 5 0 0 1 0 7" fill="none" stroke="#ddd" stroke-width=".8"/></svg>
    <span class="ml-[3px] text-[9px]">英</span>
    <span class="ml-[9px] text-[8.500px]">21:29</span>
    <svg class="ml-[11px]" width="13" height="12" viewBox="0 0 13 12"><path d="M1 1h11v8H8l-2 2-1-2H1z" fill="none" stroke="#ddd"/></svg>
  </div>
</div>

<!-- recording hint overlay -->
<div class="absolute top-[677px] left-[1182px] flex h-[23px] w-[90px] items-center justify-center bg-[#a2a2a2]/90 font-['Liberation_Serif',serif] text-[19px] leading-[23px] tracking-[3.300px] text-[#c4c4c4]">Ctrl+F9</div>
<div class="absolute top-0 left-0 h-[1px] w-[14px] bg-[#e01010]"></div>
<div class="absolute top-0 right-0 h-[3px] w-[12px] bg-[#e01010]"></div>
<div class="absolute top-[697px] left-0 h-[3px] w-[14px] bg-[#e01010]"></div>
<div class="absolute top-[699px] right-0 h-[2px] w-[14px] bg-[#e01010]"></div>
</div>
</body>
</html>
